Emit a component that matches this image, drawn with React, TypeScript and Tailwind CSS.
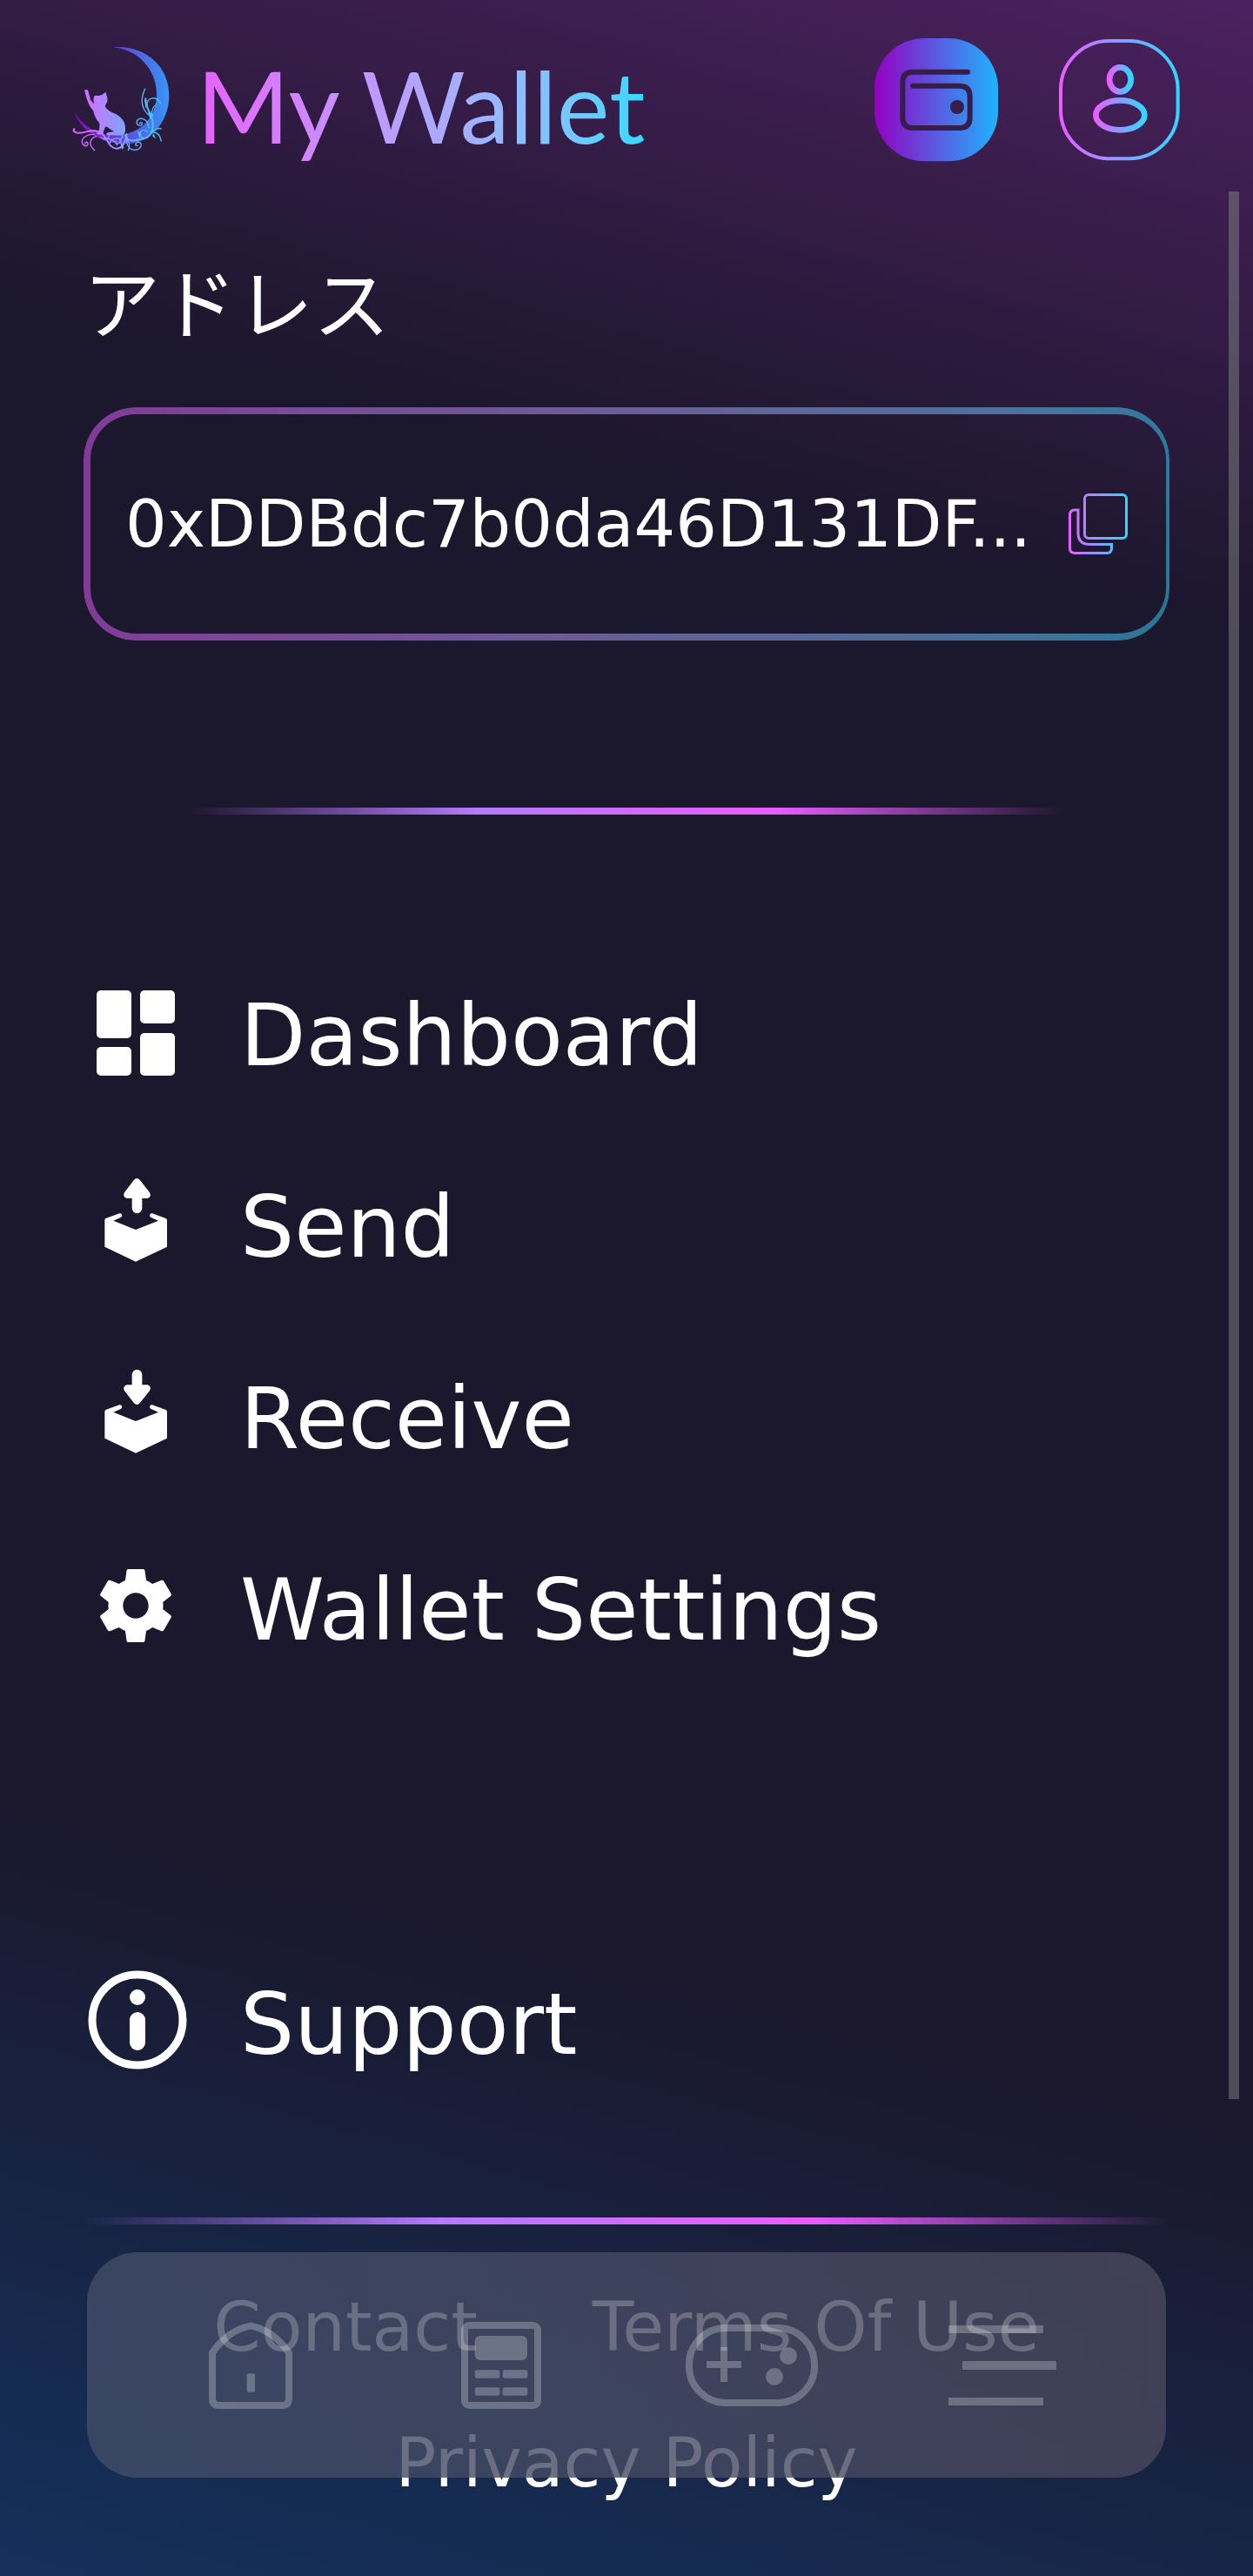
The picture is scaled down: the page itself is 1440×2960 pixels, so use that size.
import type { ReactNode } from "react";

function BrandGradient({ id }: { id: string }) {
  return (
    <linearGradient id={id} x1="0" x2="1" y1="0" y2="0">
      <stop offset="0" stopColor="#e75fff" />
      <stop offset="1" stopColor="#2fd8ff" />
    </linearGradient>
  );
}

function MoonCatLogo() {
  return (
    <svg viewBox="0 0 390 420" className="h-[140px] w-[130px] shrink-0" role="img" aria-label="Moon cat">
      <defs>
        <linearGradient id="moon" gradientUnits="userSpaceOnUse" x1="25" x2="355" y1="0" y2="0">
          <stop offset="0" stopColor="#9100c4" />
          <stop offset="0.45" stopColor="#6440d6" />
          <stop offset="1" stopColor="#3596f8" />
        </linearGradient>
        <linearGradient id="cat" gradientUnits="userSpaceOnUse" x1="60" x2="215" y1="0" y2="0">
          <stop offset="0" stopColor="#d76cff" />
          <stop offset="1" stopColor="#78a8ff" />
        </linearGradient>
        <linearGradient id="vine" gradientUnits="userSpaceOnUse" x1="25" x2="330" y1="0" y2="0">
          <stop offset="0" stopColor="#e75fff" />
          <stop offset="0.5" stopColor="#8f9fff" />
          <stop offset="1" stopColor="#2fd0f5" />
        </linearGradient>
      </defs>
      <path
        d="M160 31C272 22 355 96 355 198C355 290 288 364 205 364C120 364 52 322 26 250C58 306 108 334 168 334C258 334 312 270 312 192C312 108 246 36 160 31Z"
        fill="url(#moon)"
      />
      <path
        d="M64 182C62 176 72 175 76 181L84 212L97 228C93 216 94 204 98 198L106 197C114 199 122 196 128 192L137 185L139 196C144 206 144 218 138 226L134 234C140 248 156 254 172 262C194 274 206 292 204 316C204 326 200 334 194 335L142 334C136 330 140 325 148 324L166 322C154 316 146 308 138 304C132 308 131 318 127 330C120 334 108 333 104 328L112 322C116 306 116 296 114 290C104 280 98 268 95 254C92 244 84 240 80 230C72 214 68 198 64 182Z"
        fill="url(#cat)"
      />
      <g fill="none" stroke="url(#vine)" strokeLinecap="round" strokeWidth="4">
        <path d="M28 312C22 320 32 328 46 326C70 326 86 312 112 322C144 332 140 376 172 380C196 382 206 352 208 330" strokeWidth="6" />
        <path d="M98 332C70 328 50 346 56 362C64 378 80 370 74 360C70 356 64 358 66 364" />
        <path d="M104 338C80 346 76 368 98 386" />
        <path d="M120 340C134 356 146 350 148 336M130 344C150 344 166 352 176 368M150 362C160 340 190 340 186 356C180 370 164 360 172 354" />
        <path d="M204 336C212 360 242 352 268 346C300 338 304 300 294 270C288 250 274 240 274 208" strokeWidth="6" />
        <path d="M290 268C266 252 250 220 272 174M278 230C280 204 310 196 326 224M294 270C294 244 302 232 312 228" />
        <path d="M284 310C286 276 250 268 244 286C240 302 262 306 262 294C260 288 254 290 254 294" />
        <path d="M264 344C242 326 264 308 280 322M292 324C314 320 324 336 328 354M294 322C312 316 316 306 328 312" />
        <path d="M210 338C202 366 222 390 244 384C264 376 262 356 246 358C236 362 238 372 246 370M210 350C222 364 220 374 214 386" />
        <path d="M196 338C178 350 196 372 190 374" />
      </g>
      <path
        d="M282 256L302 262L290 280ZM246 318L260 330L252 344ZM300 326L310 346L298 338ZM190 360L200 376L192 384ZM270 208L282 230L274 240Z"
        fill="url(#vine)"
      />
    </svg>
  );
}

function MenuRow({ label, children }: { label: string; children: ReactNode }) {
  return (
    <li>
      <a href="#" className="flex h-[220px] items-center gap-15">
        <svg viewBox="0 0 120 120" className="size-[120px] shrink-0 overflow-visible" fill="#fff" aria-hidden="true">
          {children}
        </svg>
        <span className="text-[98px] leading-none whitespace-nowrap">{label}</span>
      </a>
    </li>
  );
}

function OpenBox() {
  return (
    <path d="M64 183L112 166C121 164 124 176 116 180L91 191L168 222L246 191L221 180C213 176 216 164 225 166L272 183Q276 185 276 190V281L168 332L61 281V190Q61 185 64 183Z" />
  );
}

function Divider({ className }: { className: string }) {
  return <div className={`h-2 bg-[linear-gradient(90deg,transparent,#b57afd_33%,#ea5cff_67%,transparent)] ${className}`} />;
}

function NavItem({ label, children }: { label: string; children: ReactNode }) {
  return (
    <a href="#" aria-label={label} className="flex items-center justify-center">
      {children}
    </a>
  );
}

export default function App() {
  return (
    <div className="relative flex min-h-screen flex-col overflow-hidden bg-[linear-gradient(195deg,#4c215f_0%,#1b172c_22%,#1b172c_73%,#14315c_100%)] font-['DejaVu_Sans','Noto_Sans_CJK_JP',sans-serif] text-white">
      <header className="flex h-[220px] items-start pt-11 pr-[83px] pl-19">
        <MoonCatLogo />
        <h1 className="ml-5 bg-linear-to-r from-[#e75fff] to-[#2fd8ff] bg-clip-text font-['Lato','Open_Sans',sans-serif] text-[115px] leading-[152px] whitespace-nowrap text-transparent">
          My Wallet
        </h1>
        <div className="ml-auto flex items-center gap-[70px]">
          <button type="button" aria-label="Wallet" className="size-[142px]">
            <svg viewBox="0 0 426 426" className="size-full" fill="none">
              <defs>
                <linearGradient id="wallet" x1="0" x2="1" y1="0" y2="0">
                  <stop offset="0" stopColor="#9300c2" />
                  <stop offset="1" stopColor="#1eb4ff" />
                </linearGradient>
              </defs>
              <rect width="426" height="424" rx="172" fill="url(#wallet)" />
              <g stroke="#351f4a" strokeWidth="18" strokeLinecap="round">
                <path d="M321 116H133Q97 116 97 152V273Q97 309 133 309H293Q329 309 329 273V200Q329 164 293 164H132" />
              </g>
              <circle cx="285" cy="237" r="24" fill="#351f4a" />
            </svg>
          </button>
          <button type="button" aria-label="Profile" className="size-[140px]">
            <svg viewBox="0 0 420 420" className="size-full" fill="none">
              <defs>
                <BrandGradient id="profile" />
              </defs>
              <g stroke="url(#profile)">
                <rect x="6" y="6" width="404" height="406" rx="168" strokeWidth="12" />
                <ellipse cx="211" cy="139" rx="37" ry="42" strokeWidth="20" />
                <ellipse cx="211" cy="262" rx="84" ry="51" strokeWidth="20" />
              </g>
            </svg>
          </button>
        </div>
      </header>

      <main className="flex flex-1 flex-col px-24">
        <h2 className="mt-20 text-[88px] leading-[104px]">アドレス</h2>

        <section className="relative mt-16 flex h-[268px] items-center justify-between rounded-[60px] px-12">
          <div className="pointer-events-none absolute inset-0 rounded-[60px] border-8 border-r-4 border-transparent bg-linear-to-r from-[#e75fff] to-[#2fd8ff] bg-origin-border opacity-50 [mask:linear-gradient(#000_0_0)_padding-box_exclude,linear-gradient(#000_0_0)_border-box]" />
          <span className="text-[75px] leading-none whitespace-nowrap">0xDDBdc7b0da46D131DF...</span>
          <button type="button" aria-label="Copy address">
            <svg viewBox="0 0 68 70" className="h-[70px] w-[68px]" fill="none">
              <defs>
                <linearGradient id="copy" gradientUnits="userSpaceOnUse" x1="0" x2="68" y1="0" y2="0">
                  <stop offset="0" stopColor="#e75fff" />
                  <stop offset="1" stopColor="#2fd8ff" />
                </linearGradient>
              </defs>
              <g stroke="url(#copy)" strokeWidth="3">
                <rect x="18.5" y="1.5" width="48" height="50" rx="4.5" />
                <path d="M11 19H7Q1.500 19 1.500 25V63Q1.500 68.500 7 68.500H44Q49.500 68.500 49.500 63V58.500H24Q11 58.500 11 45Z" />
              </g>
            </svg>
          </button>
        </section>

        <Divider className="mx-30 mt-48" />

        <ul className="mt-36">
          <MenuRow label="Dashboard">
            <rect x="15" y="8" width="40" height="55" rx="5" />
            <rect x="15" y="73" width="40" height="33" rx="5" />
            <rect x="65" y="8" width="40" height="38" rx="5" />
            <rect x="65" y="57" width="40" height="49" rx="5" />
          </MenuRow>
          <MenuRow label="Send">
            <g transform="translate(4 -11) scale(0.3333)">
              <path d="M162 50Q172 40 182 50L216 94Q224 108 209 114H190V148A17 17 0 0 1 155 148V114H137Q121 108 129 94Z" />
              <OpenBox />
            </g>
          </MenuRow>
          <MenuRow label="Receive">
            <g transform="translate(4 -11) scale(0.3333)">
              <path d="M162 160Q172 170 182 160L216 117Q224 103 209 97H190V62A17 17 0 0 0 155 62V97H137Q121 103 129 117Z" />
              <OpenBox />
            </g>
          </MenuRow>
          <MenuRow label="Wallet Settings">
            <path
              transform="translate(9.600 4.600) scale(4.200)"
              d="M19.430 12.980c.04-.32.07-.64.07-.98s-.03-.66-.07-.98l2.110-1.650c.19-.15.24-.42.12-.64l-2-3.460c-.12-.22-.39-.3-.61-.22l-2.490 1c-.52-.4-1.080-.73-1.690-.98l-.38-2.650C14.460 2.180 14.250 2 14 2h-4c-.25 0-.46.18-.49.42l-.38 2.650c-.61.25-1.170.59-1.690.98l-2.490-1c-.23-.09-.49 0-.61.22l-2 3.460c-.13.22-.07.49.12.64l2.110 1.650c-.04.32-.07.65-.07.98s.03.66.07.98l-2.110 1.650c-.19.15-.24.42-.12.64l2 3.460c.12.22.39.3.61.22l2.490-1c.52.4 1.080.73 1.690.98l.38 2.650c.03.24.24.42.49.42h4c.25 0 .46-.18.49-.42l.38-2.650c.61-.25 1.170-.59 1.690-.98l2.490 1c.23.09.49 0 .61-.22l2-3.460c.12-.22.07-.49-.12-.64l-2.110-1.650zM12 15.500c-1.930 0-3.500-1.570-3.500-3.500s1.570-3.500 3.500-3.500 3.500 1.570 3.500 3.500-1.570 3.500-3.500 3.500z"
            />
          </MenuRow>
        </ul>

        <ul className="mt-64">
          <MenuRow label="Support">
            <circle cx="62" cy="55" r="52" fill="none" stroke="#fff" strokeWidth="9" />
            <circle cx="62" cy="29" r="9" />
            <rect x="53" y="46" width="18" height="44" rx="9" />
          </MenuRow>
        </ul>

        <Divider className="mt-28" />

        <footer className="mt-10 flex flex-wrap justify-center gap-x-33 pb-12 text-[78px] leading-[156px] whitespace-nowrap">
          <a href="#">Contact</a>
          <a href="#">Terms Of Use</a>
          <a href="#">Privacy Policy</a>
        </footer>
      </main>

      <div className="absolute top-[220px] right-4 bottom-[548px] w-3 bg-[#7a7c7d]/55" />

      <nav className="absolute inset-x-25 bottom-[113px] grid h-[259px] grid-cols-4 rounded-[58px] bg-linear-to-r from-[#424d68]/80 to-[#49485d]/80 px-11 text-white/25">
        <NavItem label="Home">
          <svg viewBox="0 0 288 300" className="h-[100px] w-24" fill="none">
            <path d="M12 106Q70 26 144 14Q218 26 276 106V264Q276 288 252 288H36Q12 288 12 264Z" stroke="currentColor" strokeWidth="24" strokeLinejoin="round" />
            <rect x="131" y="178" width="28" height="64" rx="5" fill="currentColor" />
          </svg>
        </NavItem>
        <NavItem label="Calculator">
          <svg viewBox="0 0 276 300" className="h-[100px] w-[92px]" fill="currentColor">
            <rect x="12" y="12" width="252" height="276" rx="16" fill="none" stroke="currentColor" strokeWidth="24" />
            <rect x="47" y="48" width="181" height="84" rx="18" />
            <rect x="47" y="166" width="86" height="28" rx="7" />
            <rect x="143" y="166" width="86" height="28" rx="7" />
            <rect x="47" y="226" width="86" height="28" rx="7" />
            <rect x="143" y="226" width="86" height="28" rx="7" />
          </svg>
        </NavItem>
        <NavItem label="Games">
          <svg viewBox="0 0 152 94" className="h-[94px] w-[152px]" fill="currentColor">
            <rect x="4" y="4" width="144" height="86" rx="42" fill="none" stroke="currentColor" strokeWidth="8" />
            <path d="M40 26h8v16h16v8H48v16h-8V50H24v-8h16z" />
            <circle cx="118" cy="36" r="10" />
            <circle cx="102" cy="60" r="10" />
          </svg>
        </NavItem>
        <NavItem label="Menu">
          <svg viewBox="0 0 124 94" className="h-[94px] w-[124px]" fill="currentColor">
            <rect width="109" height="9" y="1" />
            <rect x="16" y="42" width="108" height="10" />
            <rect y="84" width="109" height="9" />
          </svg>
        </NavItem>
      </nav>
    </div>
  );
}
